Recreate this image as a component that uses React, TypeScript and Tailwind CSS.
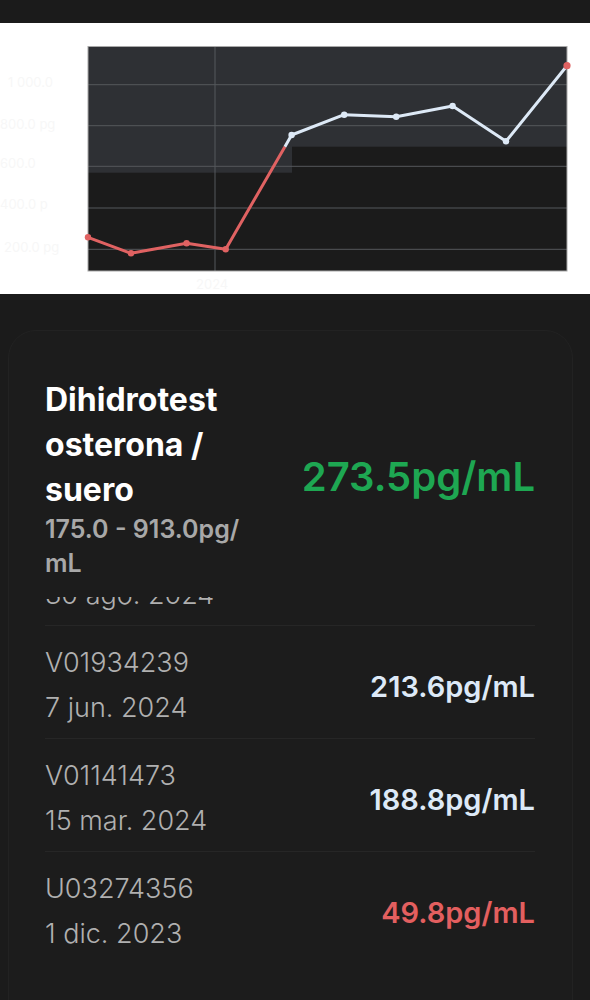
import React from "react";

const font = { fontFamily: "Inter, 'Noto Sans', sans-serif" };

function Chart() {
  const red = "#e06262";
  const white = "#dde9f6";
  const grid = "#55585c";
  const pts: [number, number][] = [
    [88, 214.3],
    [131, 230.3],
    [186.6, 220.3],
    [225.7, 226.3],
  ];
  const wpts: [number, number][] = [
    [291.6, 112],
    [344.2, 91.7],
    [396.2, 93.7],
    [452.6, 83],
    [506, 118.3],
    [567, 42.7],
  ];
  const toStr = (p: [number, number][]) => p.map((q) => q.join(",")).join(" ");
  return (
    <svg width="590" height="271" viewBox="0 0 590 271" className="block">
      <g fill="#f7f7f7" fontSize="13" fontFamily="Inter, sans-serif">
        <text x="8" y="64">1 000.0</text>
        <text x="0" y="106">800.0 pg</text>
        <text x="0" y="145">600.0</text>
        <text x="0" y="186">400.0 p</text>
        <text x="4" y="229">200.0 pg</text>
        <text x="196" y="266">2024</text>
      </g>
      <rect x="88" y="23.5" width="479" height="224.5" fill="#1b1b1b" />
      <rect x="88" y="23.5" width="204" height="126.2" fill="#2e3034" />
      <rect x="292" y="23.5" width="275" height="100.2" fill="#2e3034" />
      {[61.7, 102.7, 143.3, 185, 226.3].map((y) => (
        <line key={y} x1="88" x2="567" y1={y} y2={y} stroke={grid} strokeWidth="1" />
      ))}
      <line x1="215" x2="215" y1="23.5" y2="248" stroke={grid} strokeWidth="1" />
      <rect x="88" y="23.5" width="479" height="224.5" fill="none" stroke="#a8a8a8" strokeWidth="1" />
      <polyline
        points={toStr([...pts, [284.9, 123.7]])}
        fill="none"
        stroke={red}
        strokeWidth="3"
        strokeLinejoin="round"
      />
      <polyline
        points={toStr([[284.9, 123.7], ...wpts])}
        fill="none"
        stroke={white}
        strokeWidth="3"
        strokeLinejoin="round"
      />
      {pts.map(([x, y]) => (
        <circle key={x} cx={x} cy={y} r="3.2" fill={red} />
      ))}
      {wpts.slice(0, 5).map(([x, y]) => (
        <circle key={x} cx={x} cy={y} r="3.2" fill={white} />
      ))}
      <circle cx="567" cy="42.7" r="3.6" fill={red} />
    </svg>
  );
}

const rows = [
  { id: "V02581142", date: "30 ago. 2024", value: "", color: "text-[#dde9f7]" },
  { id: "V01934239", date: "7 jun. 2024", value: "213.6pg/mL", color: "text-[#dde9f7]" },
  { id: "V01141473", date: "15 mar. 2024", value: "188.8pg/mL", color: "text-[#dde9f7]" },
  { id: "U03274356", date: "1 dic. 2023", value: "49.8pg/mL", color: "text-[#e35f5f]" },
];

export default function App() {
  return (
    <div className="w-[590px] h-[1000px] overflow-hidden bg-[#1b1b1b]" style={font}>
      <div className="h-[23px]" />
      <div className="h-[271px] bg-white">
        <Chart />
      </div>
      <div className="pt-[36px] pl-[8px] pr-[17px]">
        <div className="h-[700px] rounded-t-[28px] border border-[#222222] bg-[#1c1c1c]">
          <div className="flex items-center justify-between pl-[36px] pr-[37px] pt-[46px] pb-[17px]">
            <div>
              <div className="text-[32px] leading-[45px] font-bold text-white">
                Dihidrotest
                <br />
                osterona /
                <br />
                suero
              </div>
              <div className="text-[25px] leading-[34px] font-semibold text-[#a8a8a8]">
                175.0 - 913.0pg/
                <br />
                mL
              </div>
            </div>
            <div className="text-[40px] font-semibold text-[#1ea752] pb-[4px]">273.5pg/mL</div>
          </div>
          <div className="overflow-hidden h-[500px]">
            <div className="-mt-[84px] pl-[36px] pr-[37px]">
              {rows.map((r, i) => (
                <div
                  key={r.id}
                  className={`flex items-center justify-between pt-[14px] pb-[8px] ${
                    i < rows.length - 1 ? "border-b border-[#262626]" : "border-b border-transparent"
                  }`}
                >
                  <div className="text-[27px] leading-[45px] font-light text-[#b0b0b0]">
                    <div>{r.id}</div>
                    <div>{r.date}</div>
                  </div>
                  {r.value ? (
                    <div className={`text-[29px] font-semibold pt-[4px] ${r.color}`}>{r.value}</div>
                  ) : null}
                </div>
              ))}
            </div>
          </div>
        </div>
      </div>
    </div>
  );
}
